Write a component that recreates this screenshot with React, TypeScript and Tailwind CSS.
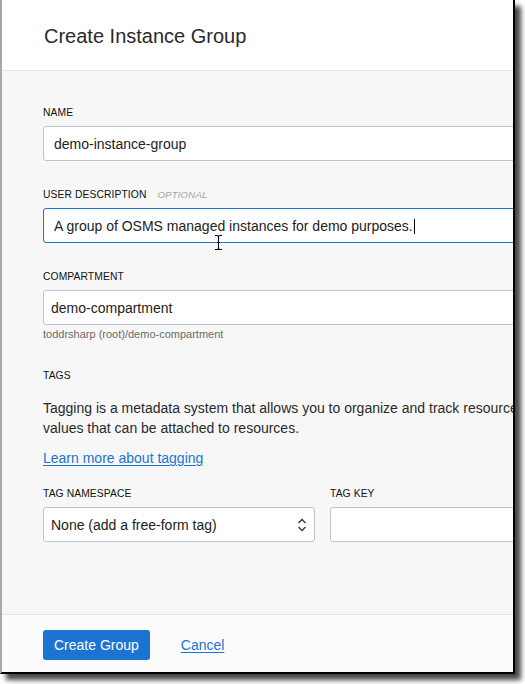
export default function App() {
  const label = "text-[10.3px] leading-[15px] pt-[1px] text-[#111] tracking-[0.1px]";
  const input =
    "h-[35px] bg-white border border-[#bfc4c9] rounded-[3px] flex items-center pt-[2px] text-[14px] text-[#222]";
  return (
    <div className="w-[525px] h-[684px] bg-white font-['Liberation_Sans',Arial,sans-serif] text-[#333]">
      <div className="w-[515px] h-[674px] flex flex-col overflow-hidden border-l-2 border-l-[#a8a8a8] border-r-2 border-r-black border-b-2 border-b-black shadow-[6px_6px_5px_rgba(0,0,0,0.72)]">
        <header className="h-[71px] shrink-0 bg-white border-b border-[#e3e3e3] flex items-center pl-[42px] pt-[1px]">
          <h1 className="text-[20px] text-[#2a2a2a] whitespace-nowrap">Create Instance Group</h1>
        </header>

        <main className="flex-1 bg-[#f7f7f7] border-b border-[#e3e3e3] pl-[41px] pt-[33px]">
          <div className={label}>NAME</div>
          <div className={`${input} mt-[6px] w-[600px] pl-[10px]`}>demo-instance-group</div>

          <div className={`${label} mt-[25px] flex items-center`}>
            <span>USER DESCRIPTION</span>
            <span className="ml-[11px] italic text-[9.6px] text-[#a3a3a3] tracking-[0.2px]">OPTIONAL</span>
          </div>
          <div className="relative mt-[6px]">
            <div className="h-[35px] w-[600px] bg-white border border-[#1b74d1] rounded-[3px] flex items-center pt-[2px] pl-[10px] text-[14px] text-[#222] whitespace-nowrap">
              A group of OSMS managed instances for demo purposes.
              <span className="inline-block w-[1px] h-[15px] bg-black ml-[1px]" />
            </div>
            <svg
              className="absolute left-[171px] top-[26px]"
              width="9"
              height="17"
              viewBox="0 0 9 17"
            >
              <path
                d="M1 1.5 H3 Q4.5 1.5 4.5 3 V14 Q4.5 15.5 3 15.5 H1 M8 1.5 H6 Q4.5 1.5 4.5 3 M4.5 14 Q4.5 15.5 6 15.5 H8 M3 8.5 H6"
                fill="none"
                stroke="white"
                strokeWidth="2.6"
              />
              <path
                d="M1 1.5 H3 Q4.5 1.5 4.5 3 V14 Q4.5 15.5 3 15.5 H1 M8 1.5 H6 Q4.5 1.5 4.5 3 M4.5 14 Q4.5 15.5 6 15.5 H8 M3 8.5 H6"
                fill="none"
                stroke="black"
                strokeWidth="1.1"
              />
            </svg>
          </div>

          <div className={`${label} mt-[25px]`}>COMPARTMENT</div>
          <div className={`${input} mt-[6px] w-[600px] pl-[7px] h-[34px]`}>demo-compartment</div>
          <div className="mt-[2px] text-[11px] leading-[14px] text-[#6b6b6b] whitespace-nowrap">
            toddrsharp (root)/demo-compartment
          </div>

          <div className={`${label} mt-[26px]`}>TAGS</div>
          <p className="mt-[15px] text-[14px] leading-[20px] text-[#2a2a2a] whitespace-nowrap">
            Tagging is a metadata system that allows you to organize and track resources within your tenancy. Tags are composed of keys and
            <br />
            values that can be attached to resources.
          </p>
          <a href="#" className="block mt-[10px] text-[14px] leading-[20px] text-[#1b74d1] underline underline-offset-2 w-max">
            Learn more about tagging
          </a>

          <div className="mt-[17px] flex">
            <div className="w-[272px] shrink-0">
              <div className={label}>TAG NAMESPACE</div>
              <div className={`${input} mt-[6px] h-[34px] pl-[7px] pr-[7px] justify-between`}>
                <span>None (add a free-form tag)</span>
                <svg width="10" height="16" viewBox="0 0 10 16" className="-mt-[2px]">
                  <path d="M1.5 6 L5 2.5 L8.5 6 M1.5 10 L5 13.5 L8.5 10" fill="none" stroke="#333" strokeWidth="1.3" />
                </svg>
              </div>
            </div>
            <div className="ml-[15px] shrink-0">
              <div className={label}>TAG KEY</div>
              <div className={`${input} mt-[6px] h-[34px] w-[300px]`} />
            </div>
          </div>
        </main>

        <footer className="h-[57px] shrink-0 bg-[#fcfcfc] flex items-start pl-[41px] pt-[15px]">
          <button className="h-[30px] px-[11px] bg-[#1b74d1] rounded-[3px] text-white text-[14px]">
            Create Group
          </button>
          <a href="#" className="ml-[31px] mt-[6px] text-[14px] leading-[18px] text-[#1b74d1] underline underline-offset-2">
            Cancel
          </a>
        </footer>
      </div>
    </div>
  );
}
